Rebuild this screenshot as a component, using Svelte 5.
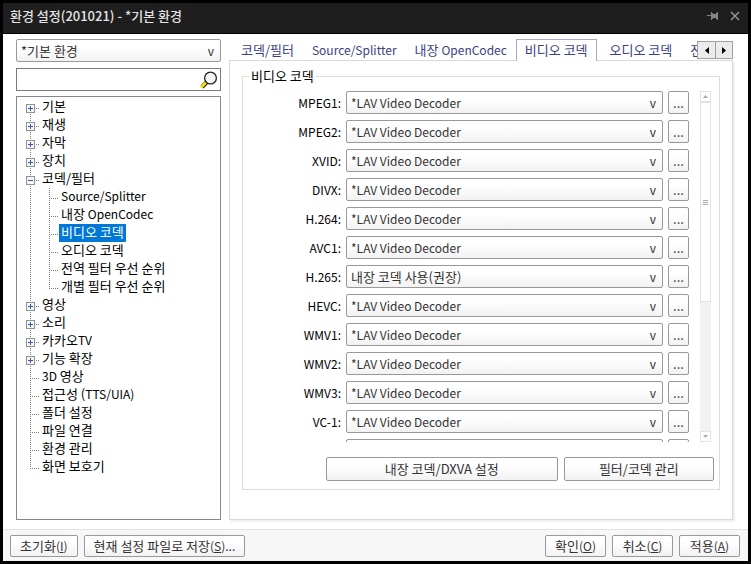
<script lang="ts">
	type Node = { label: string; open?: boolean; children?: string[] };

	let tree: Node[] = $state([
		{ label: '기본', children: [] },
		{ label: '재생', children: [] },
		{ label: '자막', children: [] },
		{ label: '장치', children: [] },
		{
			label: '코덱/필터',
			open: true,
			children: [
				'Source/Splitter',
				'내장 OpenCodec',
				'비디오 코덱',
				'오디오 코덱',
				'전역 필터 우선 순위',
				'개별 필터 우선 순위'
			]
		},
		{ label: '영상', children: [] },
		{ label: '소리', children: [] },
		{ label: '카카오TV', children: [] },
		{ label: '기능 확장', children: [] },
		{ label: '3D 영상' },
		{ label: '접근성 (TTS/UIA)' },
		{ label: '폴더 설정' },
		{ label: '파일 연결' },
		{ label: '환경 관리' },
		{ label: '화면 보호기' }
	]);

	const tabs = ['코덱/필터', 'Source/Splitter', '내장 OpenCodec', '비디오 코덱', '오디오 코덱', '전역 필터 우선 순위'];

	const lav = '*LAV Video Decoder';
	const builtin = '내장 코덱 사용(권장)';

	let codecs = $state([
		{ name: 'MPEG1', value: lav },
		{ name: 'MPEG2', value: lav },
		{ name: 'XVID', value: lav },
		{ name: 'DIVX', value: lav },
		{ name: 'H.264', value: lav },
		{ name: 'AVC1', value: lav },
		{ name: 'H.265', value: builtin },
		{ name: 'HEVC', value: lav },
		{ name: 'WMV1', value: lav },
		{ name: 'WMV2', value: lav },
		{ name: 'WMV3', value: lav },
		{ name: 'VC-1', value: lav },
		{ name: 'VP8', value: lav }
	]);

	let current = $state('비디오 코덱');
	let query = $state('');

	// odd entries are the Latin runs
	const runs = (text: string) => text.split(/([A-Za-z0-9][\x21-\x7e]+)/);
</script>

<!-- Latin is set one size below Hangul -->
{#snippet mixed(text: string)}
	{#each runs(text) as run, i}{#if i % 2}<span class="latin">{run}</span>{:else}{run}{/if}{/each}
{/snippet}

{#snippet key(text: string, letter: string, tail = '')}
	<button class="btn">{text}<span class="latin">(<u>{letter}</u>){tail}</span></button>
{/snippet}

<div class="window">
	<header class="titlebar">
		<h1>환경 설정(201021) - *기본 환경</h1>
		<button class="caption" aria-label="고정">
			<svg width="12" height="10" viewBox="0 0 12 10" shape-rendering="crispEdges">
				<path d="M0 4h4v1H0zM4 1h1v8H4zM5 3h1v4H5zM6 3h4v4H6zM9 2h1v6H9zM5 2h1v6H5zM10 1h1v8h-1z" fill="#858585" />
			</svg>
		</button>
		<button class="caption" aria-label="닫기">
			<svg width="10" height="10" viewBox="0 0 10 10">
				<path d="M1 1l8 8M9 1l-8 8" stroke="#999" stroke-width="1.4" />
			</svg>
		</button>
	</header>

	<main>
		<aside>
			<div class="combo">
				<select aria-label="환경">
					<option>*기본 환경</option>
				</select>
				<span class="arrow" aria-hidden="true">v</span>
			</div>

			<div class="search">
				<input type="text" aria-label="검색" bind:value={query} />
				<button aria-label="찾기">
					<svg width="18" height="18" viewBox="0 0 18 18">
						<path d="M2 16l5-5" stroke="#111" stroke-width="4" />
						<path d="M1 16.500l5-5" stroke="#ffe600" stroke-width="2.600" />
						<circle cx="10.500" cy="7" r="5.900" fill="#f4f5f8" stroke="#222" stroke-width="1.300" />
					</svg>
				</button>
			</div>

			<ul class="tree">
				{#each tree as node}
					<li>
						<div class="node">
							<span class="stem">
								{#if node.children}
									<button class="toggle" aria-label={node.label} aria-expanded={!!node.open} onclick={() => (node.open = !node.open)}>
										<svg width="9" height="9" viewBox="0 0 9 9" shape-rendering="crispEdges">
											<path d="M2 4h5v1H2z" fill="#3b5aa5" />
											{#if !node.open}
												<path d="M4 2h1v5H4z" fill="#3b5aa5" />
											{/if}
										</svg>
									</button>
								{/if}
							</span>
							<button class="label" onclick={() => (current = node.label)}>{@render mixed(node.label)}</button>
						</div>
						{#if node.open && node.children}
							<ul>
								{#each node.children as child}
									<li>
										<div class="node">
											<span class="stem"></span>
											<button class="label" class:selected={child === current} onclick={() => (current = child)}>{@render mixed(child)}</button>
										</div>
									</li>
								{/each}
							</ul>
						{/if}
					</li>
				{/each}
			</ul>
		</aside>

		<section class="content">
			<div class="tabbar">
				<div class="tabs" role="tablist">
					{#each tabs as tab}
						<button role="tab" class="tab" class:active={tab === current} aria-selected={tab === current} onclick={() => (current = tab)}>{@render mixed(tab)}</button>
					{/each}
				</div>
				<div class="pager">
					<button aria-label="이전">
						<svg width="4" height="7" viewBox="0 0 4 7"><path d="M4 0v7L0 3.500z" /></svg>
					</button>
					<button aria-label="다음">
						<svg width="4" height="7" viewBox="0 0 4 7"><path d="M0 0v7l4-3.500z" /></svg>
					</button>
				</div>
			</div>

			<div class="panel">
				<fieldset>
					<legend>비디오 코덱</legend>
					<div class="list">
						<div class="rows">
							{#each codecs as codec}
								<div class="row">
									<label class="latin" for={codec.name}>{codec.name}:</label>
									<div class="combo">
										<select id={codec.name} class:latin={codec.value === lav} bind:value={codec.value}>
											<option>{lav}</option>
											<option>{builtin}</option>
										</select>
										<span class="arrow" aria-hidden="true">v</span>
									</div>
									<button class="btn more" aria-label="{codec.name} 설정">...</button>
								</div>
							{/each}
						</div>
						<div class="scrollbar">
							<button aria-label="위로">
								<svg width="5" height="3" viewBox="0 0 5 3"><path d="M0 3h5L2.500 0z" fill="#aaa" /></svg>
							</button>
							<div class="thumb"><i></i><i></i><i></i></div>
							<button class="down" aria-label="아래로">
								<svg width="5" height="3" viewBox="0 0 5 3"><path d="M0 0h5L2.500 3z" fill="#aaa" /></svg>
							</button>
						</div>
					</div>
					<div class="actions">
						<button class="btn">내장 코덱/DXVA 설정</button>
						<button class="btn">필터/코덱 관리</button>
					</div>
				</fieldset>
			</div>
		</section>
	</main>

	<footer>
		{@render key('초기화', 'I')}
		{@render key('현재 설정 파일로 저장', 'S', '...')}
		<span class="spacer"></span>
		{@render key('확인', 'O')}
		{@render key('취소', 'C')}
		{@render key('적용', 'A')}
	</footer>
</div>

<style>
	:global(body) {
		margin: 0;
	}

	.window {
		box-sizing: border-box;
		height: 100vh;
		border: 3px solid #000;
		display: flex;
		flex-direction: column;
		background: #fff;
		color: #000;
		font: 13px/18px 'Noto Sans CJK KR', sans-serif;
	}

	.window :global(*) {
		box-sizing: border-box;
	}

	button,
	select,
	input {
		margin: 0;
		padding: 0;
		border: none;
		background: none;
		color: inherit;
		font: inherit;
	}

	svg {
		display: block;
	}

	.latin {
		font-size: 12px;
	}

	.titlebar {
		display: flex;
		align-items: center;
		gap: 11px;
		height: 31px;
		padding: 0 8px 4px 7px;
		background: #1e1e1e;
		border-bottom: 1px solid #000;
		color: #e4e4e4;
	}

	h1 {
		flex: 1;
		margin: 0;
		font-size: 13px;
		font-weight: 500;
	}

	main {
		flex: 1;
		min-height: 0;
		display: flex;
		gap: 8px;
		padding: 5px 15px 9px 13px;
	}

	aside {
		width: 205px;
		display: flex;
		flex-direction: column;
	}

	.combo {
		position: relative;
		flex: 1;
		height: 23px;
	}

	aside .combo {
		flex: none;
	}

	.combo select {
		appearance: none;
		width: 100%;
		height: 23px;
		padding: 0 20px 0 4px;
		border: 1px solid #999;
		border-radius: 2px;
		background: linear-gradient(#fff 30%, #f2f2f2);
		color: #333;
	}

	.arrow {
		position: absolute;
		right: 7px;
		top: 3px;
		color: #333;
		font-size: 12px;
		pointer-events: none;
	}

	.search {
		display: flex;
		align-items: center;
		height: 23px;
		margin: 6px 0 5px;
		padding-right: 2px;
		border: 1px solid #7a7a7a;
	}

	.search input {
		flex: 1;
		min-width: 0;
		padding: 0 4px;
	}

	.tree {
		flex: 1;
		min-height: 0;
		padding: 1px 0 0 9px;
		border: 1px solid #828790;
	}

	ul {
		margin: 0;
		padding: 0;
		list-style: none;
	}

	li ul {
		padding-left: 19px;
	}

	li {
		background: repeating-linear-gradient(#808080 0 1px, transparent 1px 2px) 4px 0 / 1px 100% no-repeat;
	}

	li:last-child {
		background-size: 1px 11px;
	}

	.tree > li:first-child {
		background-position: 4px 10px;
	}

	.node {
		display: flex;
		height: 18px;
	}

	.stem {
		width: 14px;
		padding-top: 6px;
		background: repeating-linear-gradient(90deg, #808080 0 1px, transparent 1px 2px) 4px 10px / 9px 1px no-repeat;
	}

	.toggle {
		display: block;
		width: 9px;
		height: 9px;
		background: #f6f6f6;
		box-shadow: inset 0 0 0 1px #919191;
	}

	.label {
		padding: 0 2px 2px;
		white-space: nowrap;
		line-height: 16px;
	}

	.label.selected {
		background: #0078d7;
		color: #fff;
	}

	.content {
		flex: 1;
		min-width: 0;
		display: flex;
		flex-direction: column;
	}

	.tabbar {
		position: relative;
		z-index: 1;
		display: flex;
		height: 22px;
		margin-bottom: -1px;
		padding-left: 3px;
	}

	.tabs {
		flex: 1;
		min-width: 0;
		display: flex;
		overflow: hidden;
	}

	.tab {
		flex: none;
		padding: 0 8px 2px;
		border: 1px solid transparent;
		border-bottom: none;
		color: #3c4080;
		white-space: nowrap;
	}

	.tab.active {
		margin-right: 4px;
		border-color: #a3abc9;
		background: #fff;
	}

	.pager {
		display: flex;
		height: 18px;
		margin-top: 2px;
		border: 1px solid #a0a0a0;
	}

	.pager button {
		width: 17px;
		display: grid;
		place-items: center;
		background: #ececec;
	}

	.pager button + button {
		border-left: 1px solid #a0a0a0;
	}

	.panel {
		flex: 1;
		min-height: 0;
		display: flex;
		padding: 6px 12px 29px;
		border: 1px solid #d9d9d9;
		box-shadow: 2px 2px 0 #f0f0f0;
	}

	fieldset {
		flex: 1;
		min-width: 0;
		display: flex;
		flex-direction: column;
		margin: 0;
		padding: 6px 5px 8px;
		border: 1px solid #dcdcdc;
	}

	legend {
		margin-left: 1px;
		padding: 0 2px;
	}

	.list {
		flex: 1;
		min-height: 0;
		display: flex;
		gap: 11px;
		padding-right: 3px;
	}

	.rows {
		flex: 1;
		display: flex;
		flex-direction: column;
		gap: 6px;
		overflow: hidden;
	}

	.row {
		display: flex;
		flex: none;
		align-items: center;
		gap: 5px;
	}

	.row label {
		width: 93px;
		text-align: right;
	}

	.btn {
		border: 1px solid #999;
		border-radius: 2px;
		background: linear-gradient(#fff 30%, #f2f2f2);
		color: #333;
		white-space: nowrap;
	}

	.more {
		width: 21px;
		height: 23px;
	}

	.scrollbar {
		width: 11px;
		display: flex;
		flex-direction: column;
		background: #f2f2f2;
	}

	.scrollbar button {
		height: 11px;
		display: grid;
		place-items: center;
		background: #fff;
		border: 1px solid #e3e3e3;
	}

	.scrollbar .down {
		margin-top: auto;
	}

	.thumb {
		height: 57%;
		display: flex;
		flex-direction: column;
		align-items: center;
		justify-content: center;
		gap: 1px;
		background: #fff;
		border: 1px solid #e3e3e3;
	}

	.thumb i {
		width: 5px;
		height: 1px;
		background: #aaa;
	}

	.actions {
		display: flex;
		gap: 6px;
		padding-left: 78px;
		margin-top: 15px;
	}

	.actions .btn {
		flex: 232 1 0;
		height: 24px;
	}

	.actions .btn + .btn {
		flex-grow: 150;
	}

	footer {
		display: flex;
		gap: 6px;
		height: 32px;
		padding: 5px 8px 0 7px;
		background: #f7f7f7;
		border-top: 1px solid #e3e3e3;
	}

	footer .btn {
		min-width: 61px;
		height: 22px;
		padding: 0 9px;
	}

	.spacer {
		flex: 1;
	}
</style>
